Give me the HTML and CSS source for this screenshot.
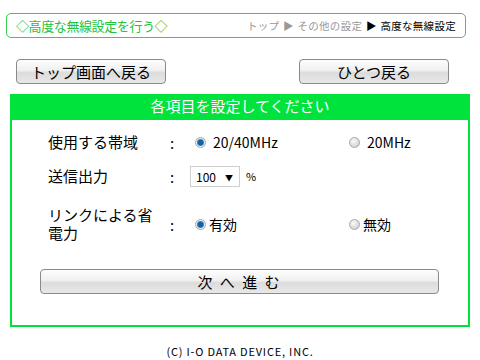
FILE: index.html
```html
<!DOCTYPE html>
<html lang="ja">
<head>
<meta charset="utf-8">
<link rel="stylesheet" href="styles.css">
</head>
<body>
<div class="header">
  <span class="title">◇高度な無線設定を行う◇</span>
  <span class="crumbs"><span class="gray">トップ ▶ その他の設定</span> ▶ 高度な無線設定</span>
</div>
<div class="navbtns">
  <button class="btn btn-nav">トップ画面へ戻る</button>
  <button class="btn btn-nav">ひとつ戻る</button>
</div>
<div class="panel">
  <div class="panel-head">各項目を設定してください</div>
  <div class="form">
    <div class="label">使用する帯域</div>
    <div class="colon">:</div>
    <div class="opt"><span class="radio on"></span>20/40MHz</div>
    <div class="opt"><span class="radio"></span>20MHz</div>

    <div class="label">送信出力</div>
    <div class="colon">:</div>
    <div class="opt opt-span"><span class="select">100<span class="arrow">▼</span></span><span class="pct">%</span></div>

    <div class="label label-wrap">リンクによる省電力</div>
    <div class="colon tight">:</div>
    <div class="opt tight"><span class="radio on"></span>有効</div>
    <div class="opt tight"><span class="radio"></span>無効</div>
  </div>
  <div class="next-wrap">
    <button class="btn btn-next">次 へ 進 む</button>
  </div>
</div>
<div class="footer">(C) I-O DATA DEVICE, INC.</div>
</body>
</html>
```
FILE: styles.css
```css
* { box-sizing: border-box; }
body {
  margin: 0;
  background: #fff;
  font-family: "Noto Sans CJK JP", "Noto Sans", sans-serif;
  color: #000;
  width: 480px;
  height: 360px;
  overflow: hidden;
}
.header {
  margin: 13px 0 0 6px;
  width: 460px;
  height: 25px;
  border: 1px solid #2fd24a;
  border-radius: 5px;
  display: flex;
  align-items: center;
  justify-content: space-between;
  padding: 0 9px 0 9px;
}
.title {
  color: #22c23a;
  font-size: 13px;
  letter-spacing: -0.4px;
}
.crumbs {
  font-size: 10.5px;
  color: #000;
  letter-spacing: 0.3px;
  word-spacing: 1px;
}
.gray { color: #999; }
.navbtns {
  margin: 21px 0 0 16px;
  width: 433px;
  display: flex;
  justify-content: space-between;
}
.btn {
  font-family: "Noto Sans CJK JP", "Noto Sans", sans-serif;
  color: #000;
  border: 1px solid #8a8a8a;
  border-radius: 4px;
  background: linear-gradient(#fdfdfd 0%, #f0f0f0 45%, #dcdcdc 55%, #e8e8e8 100%);
  padding: 0;
  cursor: pointer;
}
.btn-nav {
  width: 150px;
  height: 25px;
  font-size: 15px;
  line-height: 23px;
}
.panel {
  margin: 10px 0 0 10px;
  width: 460px;
  height: 233px;
  border: 2px solid #00e33d;
  border-top: none;
}
.panel-head {
  margin: 0 -2px;
  height: 26px;
  background: #00e33d;
  color: #fff;
  font-size: 15px;
  line-height: 24px;
  text-align: center;
}
.form {
  display: grid;
  grid-template-columns: 122px 20px 154px 1fr;
  padding: 5px 0 0 36px;
  align-items: center;
}
.label {
  font-size: 15px;
  line-height: 18px;
  height: 34px;
  display: flex;
  align-items: center;
}
.label-wrap {
  width: 108px;
  height: 46px;
}
.colon {
  font-size: 15px;
  text-align: left;
}
.tight { margin-top: 8px; }
.label-wrap { margin-top: 8px; }
.opt {
  font-size: 14px;
  display: flex;
  align-items: center;
}
.opt-span { grid-column: 3 / 5; }
.radio {
  display: inline-block;
  width: 11px;
  height: 11px;
  border-radius: 50%;
  border: 1px solid #a8a8a8;
  background: radial-gradient(circle at 40% 35%, #fafafa 0%, #d6d6d6 70%, #c0c0c0 100%);
  margin: 0 7px 0 5px;
}
.opt.tight .radio { margin-right: 3px; }
.radio.on {
  background: radial-gradient(circle, #1a5fa0 0 2.5px, #2f86c8 3px, #e8eef4 4px, #d8d8d8 100%);
}
.select {
  position: relative;
  display: inline-flex;
  align-items: center;
  width: 50px;
  height: 21px;
  border: 1px solid #cfcfcf;
  font-size: 12px;
  padding-left: 5px;
  background: #fff;
}
.arrow {
  position: absolute;
  right: 6px;
  top: 5px;
  font-size: 8px;
}
.pct {
  font-size: 11px;
  margin-left: 6px;
}
.next-wrap {
  padding: 22px 0 0 28px;
}
.btn-next {
  width: 399px;
  height: 25px;
  font-size: 15px;
  line-height: 23px;
  letter-spacing: 2px;
}
.footer {
  margin-top: 16px;
  text-align: center;
  font-size: 11px;
  letter-spacing: 0.8px;
}
```
